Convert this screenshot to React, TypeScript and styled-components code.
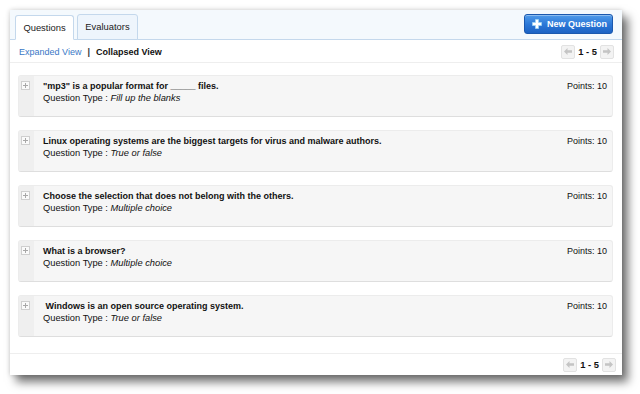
import React from "react";
import styled, { createGlobalStyle } from "styled-components";

const Global = createGlobalStyle`
  html, body { margin: 0; padding: 0; background: #ffffff; }
  body { font-family: "Liberation Sans", Arial, sans-serif; color: #111; }
  * { box-sizing: border-box; }
`;

const Page = styled.div`
  width: 640px;
  height: 394px;
  padding: 10px 0 0 10px;
  overflow: hidden;
`;

const Window = styled.div`
  width: 612px;
  height: 365px;
  background: #ffffff;
  display: flex;
  flex-direction: column;
  box-shadow: 6px 7px 9px rgba(0, 0, 0, 0.55), 0 0 5px rgba(0, 0, 0, 0.18);
`;

const Header = styled.div`
  height: 30px;
  flex: none;
  display: flex;
  align-items: flex-end;
  justify-content: space-between;
  padding: 0 9px 0 5px;
  background: #f4f9fd;
  border-bottom: 1px solid #c4d8ec;
`;

const Tabs = styled.div`
  display: flex;
  align-items: flex-end;
  gap: 3px;
  margin-bottom: -1px;
`;

const Tab = styled.div<{ $active?: boolean }>`
  height: ${(p) => (p.$active ? 25 : 26)}px;
  width: ${(p) => (p.$active ? 59 : 61)}px;
  display: flex;
  align-items: center;
  justify-content: center;
  padding-bottom: ${(p) => (p.$active ? 0 : 2)}px;
  font-size: 9.4px;
  color: #1a1a1a;
  background: ${(p) => (p.$active ? "#ffffff" : "#eef5fc")};
  border: 1px solid #c4d8ec;
  border-bottom-color: ${(p) => (p.$active ? "#ffffff" : "#c4d8ec")};
  border-radius: 3px 3px 0 0;
`;

const NewButton = styled.button`
  align-self: flex-start;
  margin-top: 4px;
  width: 89px;
  height: 20px;
  display: flex;
  align-items: center;
  gap: 5px;
  padding: 0 0 0 7px;
  font-family: "Liberation Sans", Arial, sans-serif;
  font-size: 9px;
  font-weight: bold;
  color: #ffffff;
  background: linear-gradient(#4f9bea, #2a76d6 55%, #1c62c4);
  border: 1px solid #1a58ae;
  border-radius: 3px;
  box-shadow: inset 0 1px 0 rgba(255, 255, 255, 0.35);
`;

const Toolbar = styled.div<{ $footer?: boolean }>`
  flex: none;
  height: ${(p) => (p.$footer ? 22 : 23)}px;
  display: flex;
  align-items: center;
  justify-content: space-between;
  padding: ${(p) => (p.$footer ? "0 6px 0 9px" : "1px 8px 0 9px")};
  border-${(p) => (p.$footer ? "top" : "bottom")}: 1px solid #eeeeee;
`;

const Views = styled.div`
  display: flex;
  align-items: center;
  gap: 6px;
  font-size: 9px;
`;

const ViewLink = styled.span<{ $current?: boolean }>`
  color: ${(p) => (p.$current ? "#111111" : "#3a78c6")};
  font-weight: ${(p) => (p.$current ? "bold" : "normal")};
`;

const Sep = styled.span`
  font-weight: bold;
  color: #333;
`;

const Pager = styled.div`
  display: flex;
  align-items: center;
  gap: 3px;
  font-size: 9.4px;
  font-weight: bold;
`;

const PageBtn = styled.div`
  width: 14px;
  height: 14px;
  display: flex;
  align-items: center;
  justify-content: center;
  background: #f3f3f3;
  border: 1px solid #e2e2e2;
  border-radius: 2px;
`;

const List = styled.div`
  flex: 1;
  display: flex;
  flex-direction: column;
  gap: 13px;
  padding: 12px 9px 0 8px;
`;

const Card = styled.div`
  height: 42px;
  display: grid;
  grid-template-columns: 15px 1fr auto;
  background: #f6f6f6;
  border: 1px solid #ececec;
  border-bottom-color: #dedede;
  border-radius: 3px;
  overflow: hidden;
`;

const Strip = styled.div`
  background: #efefef;
  padding: 5px 0 0 2px;
`;

const Expander = styled.div`
  width: 9px;
  height: 9px;
  border: 1px solid #cfcfcf;
  background: #fafafa;
  display: flex;
  align-items: center;
  justify-content: center;
`;

const Body = styled.div`
  padding: 4px 0 0 9px;
  font-size: 9px;
  line-height: 12px;
`;

const Title = styled.div`
  font-weight: bold;
  white-space: pre;
`;

const TypeLine = styled.div`
  font-size: 9.3px;
  color: #111;
`;

const TypeValue = styled.span`
  font-style: italic;
`;

const Points = styled.div`
  padding: 4px 5px 0 0;
  font-size: 9px;
  line-height: 12px;
`;

const Arrow = ({ dir }: { dir: "left" | "right" }) => (
  <svg width="8" height="7" viewBox="0 0 8 7" style={{ transform: dir === "right" ? "scaleX(-1)" : undefined }}>
    <path d="M0 3.5 L3.5 0 L3.5 2.2 L8 2.2 L8 4.8 L3.5 4.8 L3.5 7 Z" fill="#c4c4c4" />
  </svg>
);

const PlusIcon = () => (
  <svg width="10" height="10" viewBox="0 0 10 10">
    <path d="M3.5 0.5 H6.5 V3.5 H9.5 V6.5 H6.5 V9.5 H3.5 V6.5 H0.5 V3.5 H3.5 Z" fill="#ffffff" stroke="#9fd6f4" strokeWidth="0.8" />
  </svg>
);

const SmallPlus = () => (
  <svg width="5" height="5" viewBox="0 0 5 5">
    <path d="M2.5 0 V5 M0 2.5 H5" stroke="#a8a8a8" strokeWidth="1" />
  </svg>
);

const Pagination = () => (
  <Pager>
    <PageBtn>
      <Arrow dir="left" />
    </PageBtn>
    <span>1 - 5</span>
    <PageBtn>
      <Arrow dir="right" />
    </PageBtn>
  </Pager>
);

const questions = [
  { title: "\"mp3\" is a popular format for _____ files.", type: "Fill up the blanks" },
  { title: "Linux operating systems are the biggest targets for virus and malware authors.", type: "True or false" },
  { title: "Choose the selection that does not belong with the others.", type: "Multiple choice" },
  { title: "What is a browser?", type: "Multiple choice" },
  { title: " Windows is an open source operating system.", type: "True or false" },
];

export default function App() {
  return (
    <Page>
      <Global />
      <Window>
        <Header>
          <Tabs>
            <Tab $active>Questions</Tab>
            <Tab>Evaluators</Tab>
          </Tabs>
          <NewButton>
            <PlusIcon />
            New Question
          </NewButton>
        </Header>
        <Toolbar>
          <Views>
            <ViewLink>Expanded View</ViewLink>
            <Sep>|</Sep>
            <ViewLink $current>Collapsed View</ViewLink>
          </Views>
          <Pagination />
        </Toolbar>
        <List>
          {questions.map((q, i) => (
            <Card key={i}>
              <Strip>
                <Expander>
                  <SmallPlus />
                </Expander>
              </Strip>
              <Body>
                <Title>{q.title}</Title>
                <TypeLine>
                  Question Type : <TypeValue>{q.type}</TypeValue>
                </TypeLine>
              </Body>
              <Points>Points: 10</Points>
            </Card>
          ))}
        </List>
        <Toolbar $footer>
          <span />
          <Pagination />
        </Toolbar>
      </Window>
    </Page>
  );
}
